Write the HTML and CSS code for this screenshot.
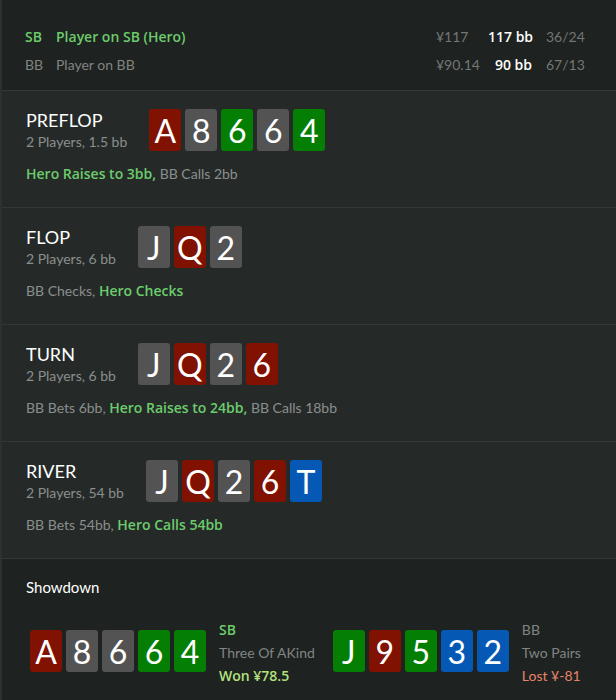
FILE: index.html
```html
<!DOCTYPE html>
<html lang="en">
<head>
<meta charset="utf-8">
<title>Hand History</title>
<link rel="stylesheet" href="styles.css">
</head>
<body>
<div class="app">
  <header class="players">
    <div class="player hero">
      <span class="pos">SB</span>
      <span class="name">Player on SB (Hero)</span>
      <span class="money">¥117</span>
      <span class="bb">117 bb</span>
      <span class="stat">36/24</span>
    </div>
    <div class="player">
      <span class="pos">BB</span>
      <span class="name">Player on BB</span>
      <span class="money">¥90.14</span>
      <span class="bb">90 bb</span>
      <span class="stat">67/13</span>
    </div>
  </header>

  <section class="street">
    <div class="street-top">
      <div class="street-info">
        <div class="street-name">PREFLOP</div>
        <div class="street-sub">2 Players, 1.5 bb</div>
      </div>
      <div class="cards">
        <span class="card red">A</span><span class="card gray">8</span><span class="card green">6</span><span class="card gray">6</span><span class="card green">4</span>
      </div>
    </div>
    <div class="actions"><span class="hero-act">Hero Raises to 3bb,</span> BB Calls 2bb</div>
  </section>

  <section class="street">
    <div class="street-top">
      <div class="street-info">
        <div class="street-name">FLOP</div>
        <div class="street-sub">2 Players, 6 bb</div>
      </div>
      <div class="cards">
        <span class="card gray">J</span><span class="card red">Q</span><span class="card gray">2</span>
      </div>
    </div>
    <div class="actions">BB Checks, <span class="hero-act">Hero Checks</span></div>
  </section>

  <section class="street">
    <div class="street-top">
      <div class="street-info">
        <div class="street-name">TURN</div>
        <div class="street-sub">2 Players, 6 bb</div>
      </div>
      <div class="cards">
        <span class="card gray">J</span><span class="card red">Q</span><span class="card gray">2</span><span class="card red">6</span>
      </div>
    </div>
    <div class="actions">BB Bets 6bb, <span class="hero-act">Hero Raises to 24bb,</span> BB Calls 18bb</div>
  </section>

  <section class="street">
    <div class="street-top">
      <div class="street-info">
        <div class="street-name">RIVER</div>
        <div class="street-sub">2 Players, 54 bb</div>
      </div>
      <div class="cards">
        <span class="card gray">J</span><span class="card red">Q</span><span class="card gray">2</span><span class="card red">6</span><span class="card blue">T</span>
      </div>
    </div>
    <div class="actions">BB Bets 54bb, <span class="hero-act">Hero Calls 54bb</span></div>
  </section>

  <section class="showdown">
    <div class="showdown-title">Showdown</div>
    <div class="hands">
      <div class="hand">
        <div class="cards">
          <span class="card red">A</span><span class="card gray">8</span><span class="card gray">6</span><span class="card green">6</span><span class="card green">4</span>
        </div>
        <div class="hand-info">
          <div class="hand-pos hero">SB</div>
          <div class="hand-rank">Three Of AKind</div>
          <div class="won">Won ¥78.5</div>
        </div>
      </div>
      <div class="hand">
        <div class="cards">
          <span class="card green">J</span><span class="card red">9</span><span class="card green">5</span><span class="card blue">3</span><span class="card blue">2</span>
        </div>
        <div class="hand-info">
          <div class="hand-pos">BB</div>
          <div class="hand-rank">Two Pairs</div>
          <div class="lost">Lost ¥-81</div>
        </div>
      </div>
    </div>
  </section>
</div>
</body>
</html>
```

FILE: styles.css
```css
* { box-sizing: border-box; }

html, body {
  margin: 0;
  padding: 0;
  background: #1e2220;
}

body {
  font-family: Lato, "Open Sans", "Liberation Sans", sans-serif;
  color: #8a8e8c;
  font-size: 14px;
}

.player .bb,
.player.hero .pos,
.player.hero .name,
.hero-act,
.hand-pos.hero,
.won {
  font-family: "Open Sans", Lato, "Liberation Sans", sans-serif;
  font-weight: 600;
  font-size: 14px;
}

.app {
  width: 616px;
  height: 700px;
  border-left: 2px solid #2c3131;
  background: #252a29;
  overflow: hidden;
}

.players {
  height: 91px;
  background: #1e2220;
  border-bottom: 1px solid #333837;
  padding: 22px 0 0 23px;
}

.player {
  display: grid;
  grid-template-columns: 31px 380px 52px 44px 1fr;
  align-items: center;
  height: 28px;
  color: #808583;
  white-space: nowrap;
}

.player .money { color: #727775; }
.player .bb { text-align: right; color: #ffffff; }
.player .stat { padding-left: 14px; color: #727775; }

.player.hero .pos,
.player.hero .name { color: #6ccc6c; }

.street {
  height: 117px;
  border-bottom: 1px solid #333837;
  padding: 17px 0 0 24px;
}

.street-top {
  display: flex;
  align-items: center;
  gap: 22px;
}

.street-name {
  color: #ffffff;
  font-size: 18px;
  line-height: 24px;
}

.street-sub {
  color: #8a8f8d;
  line-height: 20px;
}

.actions {
  margin-top: 12px;
  color: #8a8f8d;
  line-height: 20px;
}

.hero-act { color: #6ccc6c; }

.cards {
  display: flex;
  gap: 4px;
}

.card {
  width: 32px;
  height: 42px;
  border-radius: 3px;
  color: #ffffff;
  font-size: 32px;
  line-height: 44px;
  text-align: center;
}

.card.red { background: #811100; }
.card.gray { background: #535353; }
.card.green { background: #047f04; }
.card.blue { background: #0559b4; }

.showdown {
  height: 142px;
  background: #1e2220;
  padding: 18px 0 0 24px;
}

.showdown-title {
  color: #ffffff;
  font-size: 15px;
  line-height: 20px;
}

.hands {
  display: flex;
  gap: 18px;
  margin-top: 33px;
}

.hand {
  display: flex;
  gap: 13px;
  align-items: flex-start;
  padding-left: 4px;
}

.hand + .hand { padding-left: 0; }

.hand-info {
  margin-top: -12px;
  line-height: 23px;
  color: #808583;
}

.hand-pos { color: #808583; }
.hand-pos.hero { color: #6ccc6c; }
.won { color: #b3e27e; }
.lost { color: #e7836b; }
```
